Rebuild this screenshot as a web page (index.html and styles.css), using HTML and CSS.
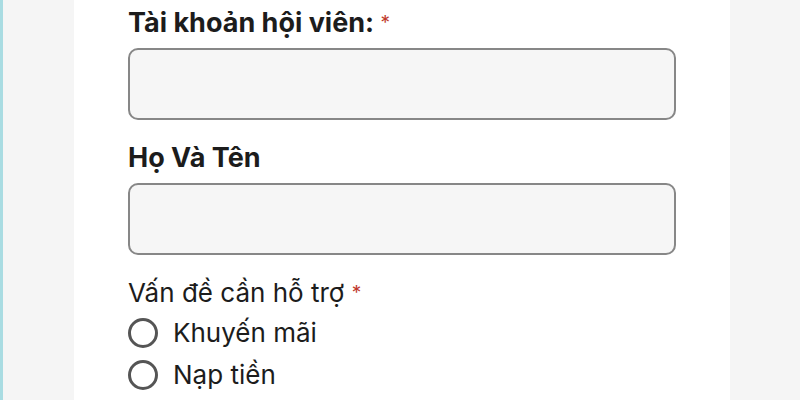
FILE: index.html
```html
<!DOCTYPE html>
<html lang="vi">
<head>
<meta charset="utf-8">
<link rel="stylesheet" href="styles.css">
</head>
<body>
<div class="page">
  <div class="edge"></div>
  <div class="side"></div>
  <main class="form">
    <div class="label bold first">Tài khoản hội viên: <span class="req">*</span></div>
    <div class="input"></div>
    <div class="label bold">Họ Và Tên</div>
    <div class="input"></div>
    <div class="label regular">Vấn đề cần hỗ trợ <span class="req">*</span></div>
    <div class="options">
      <div class="option"><span class="radio"></span><span>Khuyến mãi</span></div>
      <div class="option"><span class="radio"></span><span>Nạp tiền</span></div>
      <div class="option"><span class="radio"></span><span>Rút tiền</span></div>
    </div>
  </main>
  <div class="side right"></div>
</div>
</body>
</html>
```

FILE: styles.css
```css
html, body {
  margin: 0;
  padding: 0;
  height: 100%;
  overflow: hidden;
}
body {
  font-family: "Inter", "Liberation Sans", sans-serif;
  color: #1c1c1c;
}
.page {
  display: flex;
  height: 400px;
  overflow: hidden;
}
.edge {
  width: 3px;
  background: #a9dce2;
}
.side {
  width: 71px;
  background: #f5f5f5;
}
.side.right {
  flex: 1;
}
.form {
  width: 656px;
  flex-shrink: 0;
  background: #fff;
  padding-left: 54px;
  box-sizing: border-box;
  display: flex;
  flex-direction: column;
}
.form > * {
  flex-shrink: 0;
}
.label {
  font-size: 26px;
  line-height: 34px;
}
.label.bold {
  font-size: 27px;
  font-weight: 700;
}
.label.first {
  margin-top: 6px;
}
.req {
  color: #c0392b;
  font-size: 19px;
  vertical-align: top;
  font-weight: 400;
}
.input {
  width: 548px;
  height: 72px;
  box-sizing: border-box;
  border: 2px solid #878787;
  border-radius: 10px;
  background: #f6f6f6;
  margin-top: 8px;
  margin-bottom: 21px;
}
.label.regular {
  font-weight: 400;
}
.options {
  display: flex;
  flex-direction: column;
  gap: 8px;
  margin-top: 6px;
}
.option {
  display: flex;
  align-items: center;
  gap: 15px;
  font-size: 26px;
  line-height: 34px;
}
.radio {
  width: 30px;
  height: 30px;
  box-sizing: border-box;
  border: 3px solid #555;
  border-radius: 50%;
}
```
